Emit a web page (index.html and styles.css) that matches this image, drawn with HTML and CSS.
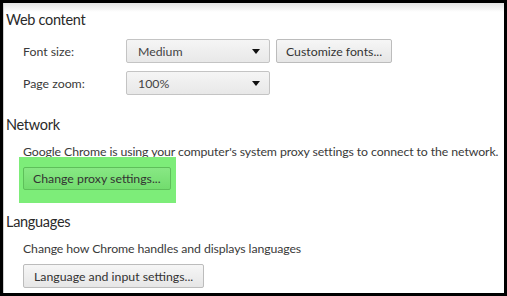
FILE: index.html
```html
<!DOCTYPE html>
<html lang="en">
<head>
    <meta charset="UTF-8">
    <title>Settings</title>
    <link rel="stylesheet" href="styles.css">
</head>
<body>
    <div class="settings-panel">
        <section class="settings-section">
            <h3>Web content</h3>
            <div class="setting-row">
                <span class="setting-label">Font size:</span>
                <div class="select-box">Medium <span class="arrow"></span></div>
                <button class="btn">Customize fonts...</button>
            </div>
            <div class="setting-row">
                <span class="setting-label">Page zoom:</span>
                <div class="select-box">100% <span class="arrow"></span></div>
            </div>
        </section>

        <section class="settings-section network">
            <h3>Network</h3>
            <p class="setting-text">Google Chrome is using your computer's system proxy settings to connect to the network.</p>
            <div class="highlight">
                <button class="btn">Change proxy settings...</button>
            </div>
        </section>

        <section class="settings-section languages">
            <h3>Languages</h3>
            <p class="setting-text">Change how Chrome handles and displays languages</p>
            <div class="button-row">
                <button class="btn">Language and input settings...</button>
            </div>
        </section>
    </div>
</body>
</html>
```

FILE: styles.css
```css
html, body {
    margin: 0;
    height: 100%;
    background-color: #000000;
}

body {
    padding: 3px 3px 3px 3px;
    box-sizing: border-box;
    font-family: Lato, "Open Sans", sans-serif;
    font-size: 12.3px;
    color: #3a3a3a;
}

.settings-panel {
    height: 100%;
    box-sizing: border-box;
    background: linear-gradient(#e4e4e4, #ffffff 9px);
    border-left: 1px solid #cfcfcf;
    padding: 7px 0 0 2px;
    overflow: hidden;
}

.settings-section h3 {
    margin: 0;
    font-size: 14.5px;
    letter-spacing: -0.3px;
    font-weight: normal;
    color: #2a2a2a;
    line-height: 20px;
}

.network {
    margin-top: 20px;
}

.languages {
    margin-top: 9px;
}

.setting-row {
    display: flex;
    align-items: center;
    padding-left: 17px;
    margin-top: 9px;
}

.setting-row + .setting-row {
    margin-top: 8px;
}

.setting-label {
    width: 103px;
}

.select-box {
    box-sizing: border-box;
    width: 144px;
    height: 24px;
    display: flex;
    align-items: center;
    justify-content: space-between;
    padding: 0 9px 0 11px;
    border: 1px solid #c4c4c4;
    border-radius: 2px;
    background: linear-gradient(#f5f5f5, #e8e8e8);
    color: #444;
}

.arrow {
    width: 0;
    height: 0;
    border-left: 4px solid transparent;
    border-right: 4px solid transparent;
    border-top: 5px solid #111;
}

.btn {
    box-sizing: border-box;
    height: 24px;
    padding: 0 9px;
    margin-left: 6px;
    border: 1px solid #bcbcbc;
    border-radius: 2px;
    background: linear-gradient(#f6f6f6, #e6e6e6);
    font-family: inherit;
    font-size: 12.3px;
    color: #333;
}

.setting-text {
    margin: 9px 0 0 17px;
    line-height: 16px;
    letter-spacing: -0.1px;
    white-space: nowrap;
}

.highlight {
    display: inline-block;
    margin: -3px 0 0 13px;
    padding: 10px 5px 13px 4px;
    background-color: #7ded79;
}

.highlight .btn,
.button-row .btn {
    margin-left: 0;
}

.highlight .btn {
    height: 23px;
    background: linear-gradient(#88e884, #72dc6e);
    border-color: #5ebf5a;
}

.button-row {
    padding-left: 17px;
    margin-top: 7px;
}

.button-row .btn {
    padding: 0 10px;
}
```
